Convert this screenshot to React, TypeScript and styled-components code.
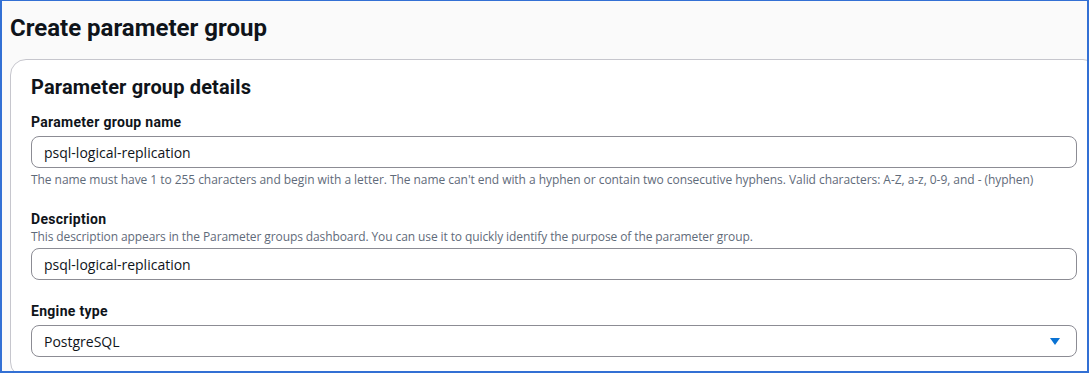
import React from "react";
import styled, { createGlobalStyle } from "styled-components";

const GlobalStyle = createGlobalStyle`
  html, body {
    margin: 0;
    padding: 0;
    background: #ffffff;
  }
  * {
    box-sizing: border-box;
  }
`;

const App = () => {
  return (
    <>
      <GlobalStyle />
      <Frame>
        <Title>Create parameter group</Title>
        <Card>
          <CardHeader>Parameter group details</CardHeader>
          <Field>
            <Label>Parameter group name</Label>
            <Input>psql-logical-replication</Input>
            <Hint>
              The name must have 1 to 255 characters and begin with a letter.
              The name can&apos;t end with a hyphen or contain two consecutive
              hyphens. Valid characters: A-Z, a-z, 0-9, and - (hyphen)
            </Hint>
          </Field>
          <Field>
            <Label>Description</Label>
            <Description>
              This description appears in the Parameter groups dashboard. You
              can use it to quickly identify the purpose of the parameter group.
            </Description>
            <Input>psql-logical-replication</Input>
          </Field>
          <Field>
            <Label>Engine type</Label>
            <Select>
              <span>PostgreSQL</span>
              <svg width="10" height="7" viewBox="0 0 10 7">
                <polygon points="0,0 10,0 5,7" fill="#0972d3" />
              </svg>
            </Select>
          </Field>
        </Card>
      </Frame>
    </>
  );
};

export default App;

const Frame = styled.div`
  height: 373px;
  width: 100%;
  overflow: hidden;
  background: #fafafa;
  border: 2px solid #3370d4;
  border-top-width: 1px;
  padding: 12px 0 0 8px;
  font-family: "Open Sans", "Noto Sans", sans-serif;
  color: #0f141a;
`;
const Title = styled.h1`
  margin: 0 0 16px;
  font-family: Roboto, "Open Sans", sans-serif;
  font-size: 24px;
  line-height: 30px;
  font-weight: 700;
`;
const Card = styled.div`
  background: #ffffff;
  border: 1px solid #c6c6cd;
  border-radius: 16px;
  margin-right: -12px;
  padding: 15px 21px 20px 20px;
  display: flex;
  flex-direction: column;
  gap: 20px;
`;
const CardHeader = styled.h2`
  margin: 0 0 -8px;
  font-family: Roboto, "Open Sans", sans-serif;
  font-size: 20px;
  line-height: 24px;
  font-weight: 700;
  letter-spacing: 0.15px;
`;
const Field = styled.div`
  display: flex;
  flex-direction: column;
`;
const Label = styled.div`
  font-family: Roboto, "Open Sans", sans-serif;
  font-size: 14px;
  line-height: 22px;
  font-weight: 700;
  letter-spacing: 0.3px;
  margin-bottom: 3px;
`;
const Description = styled.div`
  font-size: 12px;
  line-height: 16px;
  color: #5f6b7a;
  letter-spacing: -0.1px;
  margin: -4px 0 3px;
`;
const Hint = styled.div`
  font-size: 12px;
  line-height: 16px;
  color: #5f6b7a;
  letter-spacing: -0.05px;
  margin-top: 4px;
`;
const Input = styled.div`
  height: 32px;
  border: 1px solid #8c8c94;
  border-radius: 8px;
  padding: 0 12px;
  display: flex;
  align-items: center;
  font-size: 14px;
  color: #0f141a;
  background: #ffffff;
`;
const Select = styled(Input)`
  justify-content: space-between;
  padding-right: 16px;
`;
